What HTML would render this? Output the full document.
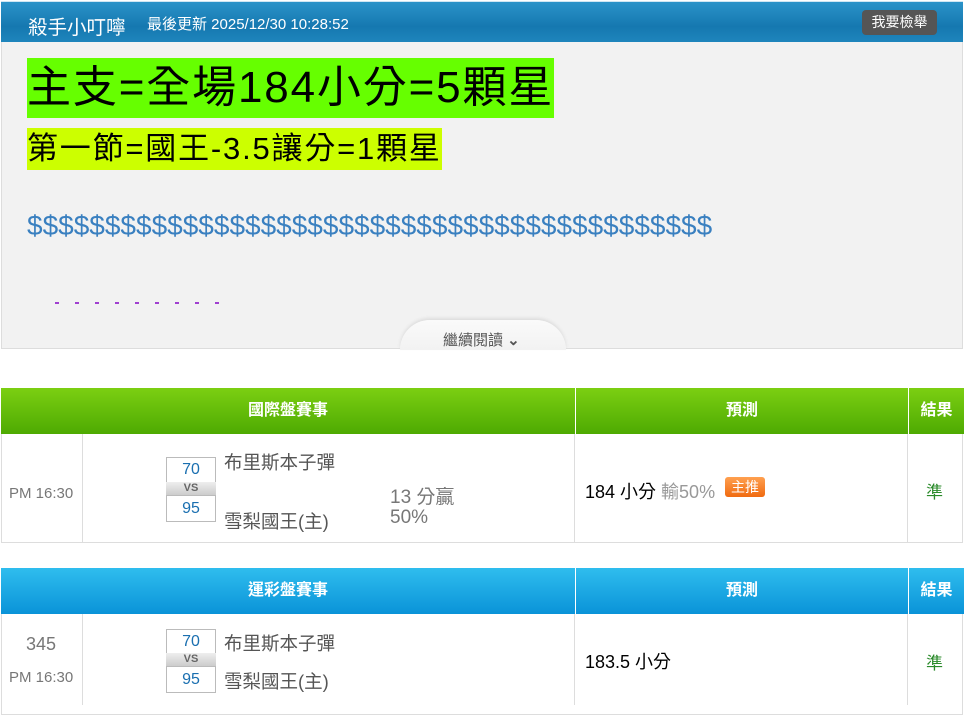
<!DOCTYPE html><html><head><meta charset="utf-8"><style>
body{margin:0;width:965px;height:705px;background:#fff;font-family:"Liberation Sans","Noto Sans CJK TC",sans-serif;position:relative;overflow:hidden}
.a{position:absolute;white-space:nowrap}
.hd{left:1px;top:1px;width:962px;height:41px;background:linear-gradient(#2b93c9,#1578b0 60%,#1f86bd);border-top:1px solid #cfe6f3}
.box{left:1px;top:42px;width:960px;height:306px;background:#f2f2f2;border:1px solid #ddd;border-top:none}
.th{height:46px;color:#fff;font-weight:bold;font-size:16px;line-height:46px;text-align:center}
.g{background:linear-gradient(#7ccf12,#4eaa02)}
.b{background:linear-gradient(#2fbdee,#0a93d8)}
.row{border:1px solid #ddd;border-top:none;background:#fff}
.sc{left:166px;width:48px;border:1px solid #bbb;background:#fff;color:#1a6fb0;font-size:16px;text-align:center}
</style></head><body>
<div class="a hd"></div>
<div class="a" style="left:28px;top:11px;color:#fff;font-size:19.5px">殺手小叮嚀</div>
<div class="a" style="left:147px;top:13px;color:#fff;font-size:15px">最後更新 2025/12/30 10:28:52</div>
<div class="a" style="left:862px;top:10px;width:75px;height:25px;background:#555;border-radius:4px;color:#fff;font-size:14px;line-height:25px;text-align:center">我要檢舉</div>
<div class="a box"></div>
<div class="a" style="left:27px;top:58px;height:60px;background:#66ff00;font-size:44px;line-height:60px;letter-spacing:1.85px">主支=全場184小分=5顆星</div>
<div class="a" style="left:27px;top:128px;height:42px;background:#ccff00;font-size:31px;line-height:42px;letter-spacing:1.8px">第一節=國王-3.5讓分=1顆星</div>
<div class="a" style="left:27px;top:210px;color:#3a80c0;font-size:28px">$$$$$$$$$$$$$$$$$$$$$$$$$$$$$$$$$$$$$$$$$$$$</div>
<div class="a" style="left:55px;top:302px;width:170px;height:2px;background:repeating-linear-gradient(90deg,#a040d0 0 4px,transparent 4px 20px)"></div>
<div class="a" style="left:400px;top:320px;width:166px;height:30px;background:linear-gradient(#fafafa,#f2f2f2);border-radius:40px 40px 0 0;box-shadow:0 -2px 3px #ddd"></div>
<div class="a" style="left:443px;top:329px;color:#555;font-size:15px">繼續閱讀 <b>⌄</b></div>

<div class="a th g" style="left:1px;top:388px;width:574px">國際盤賽事</div>
<div class="a th g" style="left:575px;top:388px;width:332px;border-left:1px solid #fff">預測</div>
<div class="a th g" style="left:908px;top:388px;width:55px;border-left:1px solid #fff">結果</div>
<div class="a row" style="left:1px;top:434px;width:960px;height:108px"></div>
<div class="a" style="left:82px;top:434px;width:1px;height:109px;background:#ddd"></div>
<div class="a" style="left:574px;top:434px;width:1px;height:109px;background:#ddd"></div>
<div class="a" style="left:907px;top:434px;width:1px;height:109px;background:#ddd"></div>
<div class="a" style="left:9px;top:485px;color:#777;font-size:15px">PM 16:30</div>
<div class="a sc" style="top:457px;height:24px;line-height:24px">70</div>
<div class="a" style="left:166px;top:482px;width:50px;height:13px;background:linear-gradient(#eee,#ccc);color:#666;font-size:11px;font-weight:bold;text-align:center;line-height:13px">VS</div>
<div class="a sc" style="top:495px;height:25px;line-height:25px">95</div>
<div class="a" style="left:224px;top:449px;color:#555;font-size:18.5px">布里斯本子彈</div>
<div class="a" style="left:224px;top:508px;color:#555;font-size:18.5px">雪梨國王(主)</div>
<div class="a" style="left:390px;top:482px;color:#777;font-size:19px">13 分贏</div>
<div class="a" style="left:390px;top:507px;color:#777;font-size:19px">50%</div>
<div class="a" style="left:585px;top:478px;color:#000;font-size:18px">184 小分 <span style="color:#999">輸50%</span></div>
<div class="a" style="left:725px;top:477px;width:40px;height:20px;background:linear-gradient(#ffa050,#f06a10);border-radius:3px;color:#fff;font-size:14px;line-height:20px;text-align:center">主推</div>
<div class="a" style="left:926px;top:478px;color:#2a8a2a;font-size:17px">準</div>

<div class="a th b" style="left:1px;top:568px;width:574px">運彩盤賽事</div>
<div class="a th b" style="left:575px;top:568px;width:332px;border-left:1px solid #fff">預測</div>
<div class="a th b" style="left:908px;top:568px;width:55px;border-left:1px solid #fff">結果</div>
<div class="a row" style="left:1px;top:614px;width:960px;height:100px"></div>
<div class="a" style="left:82px;top:614px;width:1px;height:91px;background:#ddd"></div>
<div class="a" style="left:574px;top:614px;width:1px;height:91px;background:#ddd"></div>
<div class="a" style="left:907px;top:614px;width:1px;height:91px;background:#ddd"></div>
<div class="a" style="left:26px;top:634px;color:#777;font-size:18px">345</div>
<div class="a" style="left:9px;top:669px;color:#777;font-size:15px">PM 16:30</div>
<div class="a sc" style="top:629px;height:24px;line-height:24px">70</div>
<div class="a" style="left:166px;top:653px;width:50px;height:13px;background:linear-gradient(#eee,#ccc);color:#666;font-size:11px;font-weight:bold;text-align:center;line-height:13px">VS</div>
<div class="a sc" style="top:666px;height:25px;line-height:25px">95</div>
<div class="a" style="left:224px;top:630px;color:#555;font-size:18.5px">布里斯本子彈</div>
<div class="a" style="left:224px;top:668px;color:#555;font-size:18.5px">雪梨國王(主)</div>
<div class="a" style="left:585px;top:648px;color:#000;font-size:18px">183.5 小分</div>
<div class="a" style="left:926px;top:649px;color:#2a8a2a;font-size:17px">準</div>
</body></html>
